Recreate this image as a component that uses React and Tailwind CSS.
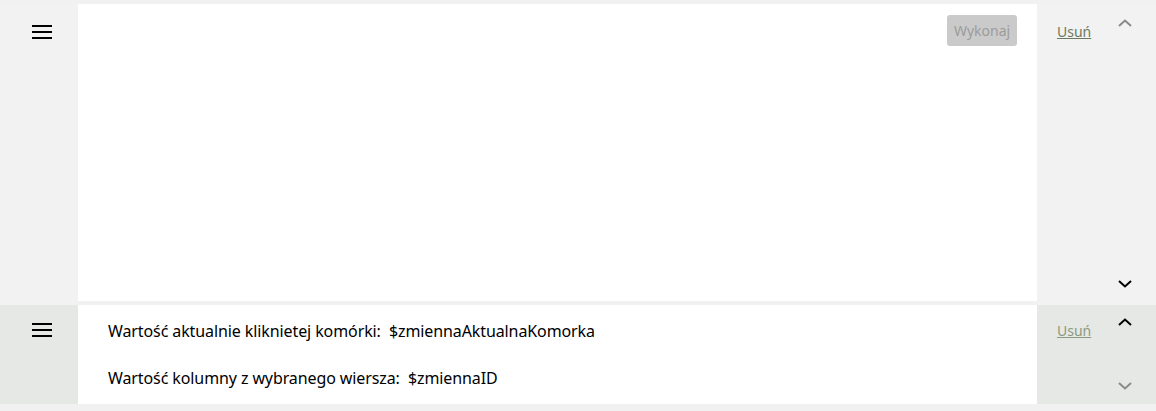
import React from "react";

const font = { fontFamily: '"Noto Sans", "Open Sans", sans-serif' };

const Hamburger = () => (
  <svg width="20" height="14" viewBox="0 0 20 14" className="text-black">
    <rect x="0" y="0" width="20" height="2" fill="currentColor" />
    <rect x="0" y="6" width="20" height="2" fill="currentColor" />
    <rect x="0" y="12" width="20" height="2" fill="currentColor" />
  </svg>
);

const Chevron = ({ up, className }) => (
  <svg width="14" height="8" viewBox="0 0 14 8" className={className}>
    <path
      d={up ? "M1 7 L7 1.5 L13 7" : "M1 1 L7 6.5 L13 1"}
      fill="none"
      stroke="currentColor"
      strokeWidth="2"
    />
  </svg>
);

const Side = ({ upDim, downDim, linkColor, top, arrows }) => (
  <div className="w-[119px] shrink-0 flex">
    <div className={top}>
      <a href="#" className={`pl-5 text-[14px] underline ${linkColor}`}>
        Usuń
      </a>
    </div>
    <div className={`ml-auto mr-[24px] flex flex-col justify-between ${arrows}`}>
      <Chevron up className={upDim ? "text-[#8a8a8a]" : "text-black"} />
      <Chevron className={downDim ? "text-[#8a8a8a]" : "text-black"} />
    </div>
  </div>
);

export default function App() {
  return (
    <div
      className="w-[1156px] h-[411px] bg-[#f1f1f1] pt-1 overflow-hidden"
      style={font}
    >
      <div className="flex h-[301px]">
        <div className="w-[78px] shrink-0 flex justify-start pl-8 pt-[21px] bg-[#f2f2f2]">
          <Hamburger />
        </div>
        <div className="flex-1 bg-white h-[297px] flex justify-end items-start pt-[11px] pr-5">
          <button className="w-[70px] h-[31px] rounded-[3px] bg-[#cacaca] text-[#9c9c9c] text-[14px]">
            Wykonaj
          </button>
        </div>
        <div className="bg-[#f2f2f2] flex">
          <Side
            upDim
            linkColor="text-[#6b7b60]"
            top="pt-[15px]"
            arrows="pt-[15px] pb-[17px]"
          />
        </div>
      </div>
      <div className="flex h-[99px]">
        <div className="w-[78px] shrink-0 flex justify-start pl-8 pt-[18px] bg-[#e6e8e6]">
          <Hamburger />
        </div>
        <div className="flex-1 bg-white pl-[30px] pt-[14px] text-[16px] text-black whitespace-pre tracking-[-0.1px]">
          <p className="leading-6">Wartość aktualnie kliknietej komórki:  $zmiennaAktualnaKomorka</p>
          <p className="leading-6 mt-[23px]">Wartość kolumny z wybranego wiersza:  $zmiennaID</p>
        </div>
        <div className="bg-[#e6e8e6] flex">
          <Side
            downDim
            linkColor="text-[#8a9a80]"
            top="pt-[13px]"
            arrows="pt-[13px] pb-[14px]"
          />
        </div>
      </div>
    </div>
  );
}
